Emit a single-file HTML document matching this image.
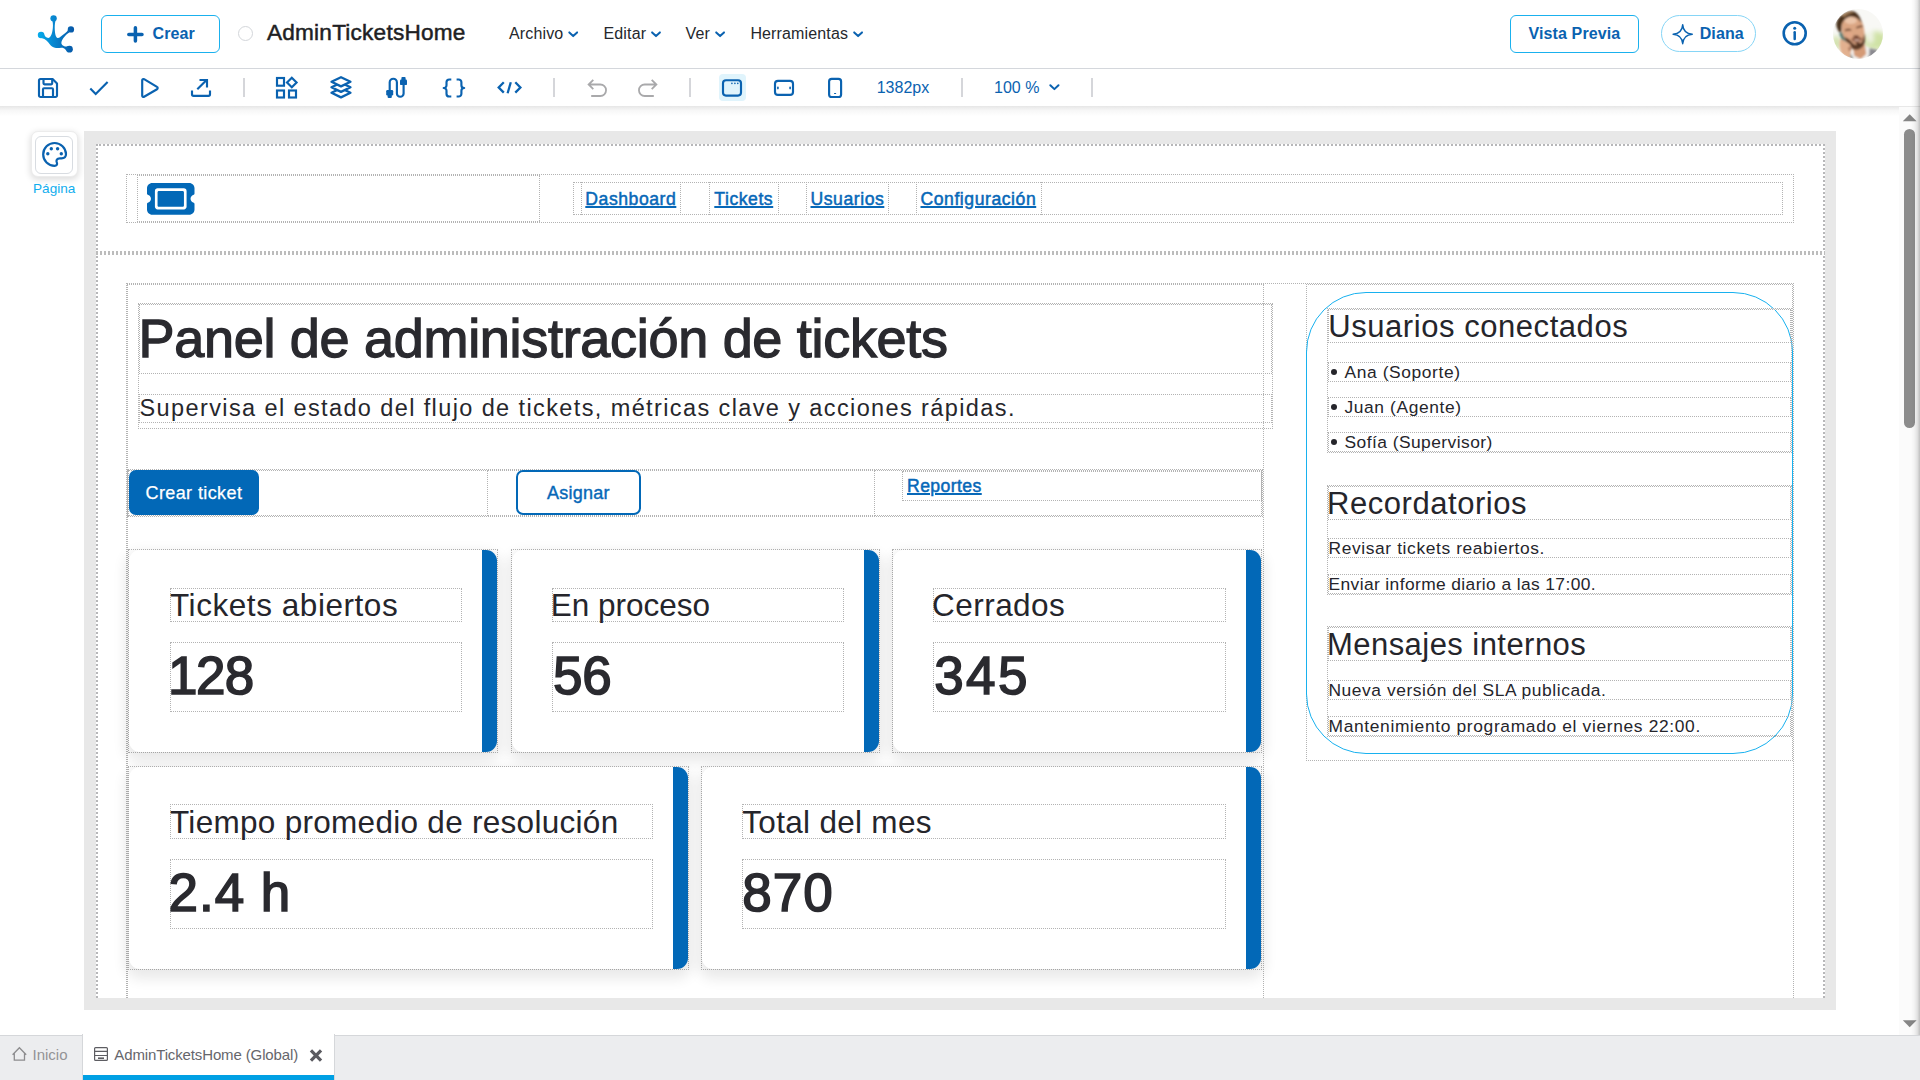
<!DOCTYPE html>
<html lang="es">
<head>
<meta charset="utf-8">
<title>AdminTicketsHome</title>
<style>
*{box-sizing:border-box;margin:0;padding:0}
html,body{width:1920px;height:1080px;overflow:hidden;background:#fff}
body{position:relative;font-family:"Liberation Sans",sans-serif;color:#25282d;-webkit-font-smoothing:antialiased}
.a{position:absolute}
.t{position:absolute;white-space:nowrap;line-height:1}
svg{position:absolute;overflow:visible}
.ic{fill:none;stroke:#0a62b0;stroke-width:2.150;stroke-linecap:round;stroke-linejoin:round}
.gr{fill:none;stroke:#a9a9ab;stroke-width:1.8;stroke-linecap:butt;stroke-linejoin:miter}
.sep{position:absolute;top:78px;width:2px;height:19px;background:#d5d6da}
.d{position:absolute;border:1px dotted #b3b3b3}
.menu{position:absolute;top:25px;font-size:16px;letter-spacing:.14px;line-height:18px;white-space:nowrap;color:#25282d}
.btnh{position:absolute;top:15px;height:38px;border:1px solid #1ab1ee;border-radius:6px;background:#fff}
.bh{position:absolute;font-weight:bold;font-size:16px;letter-spacing:.12px;line-height:18px;color:#0a62b0;white-space:nowrap}
.cv{font-family:"Liberation Sans",sans-serif;color:#25252b}
.card{position:absolute;background:#fff;border-right:15px solid #0268b7;border-radius:11px;box-shadow:0 6px 13px 4px rgba(0,0,0,.088)}
.lab{font-size:31.500px}
.num{font-size:53px;color:#2a2a2f;-webkit-text-stroke:1.600px #2a2a2f}
.sh{font-size:31px;letter-spacing:.55px}
.si{font-size:17.4px;letter-spacing:.6px}
.lnk{font-size:17.600px;letter-spacing:.55px;color:#0768b8;text-decoration:underline;text-decoration-thickness:1.500px;text-underline-offset:1.100px;-webkit-text-stroke:.5px #0768b8}
</style>
</head>
<body>
<!-- ============ HEADER ============ -->
<div class="a" id="hdr" style="left:0;top:0;width:1920px;height:69px;background:#fff;border-bottom:1px solid #d4d7dc"></div>

<!-- logo -->
<svg style="left:30px;top:8px" width="54" height="52" viewBox="0 0 1122 1080">
<defs><linearGradient id="lg" x1="160" y1="0" x2="920" y2="0" gradientUnits="userSpaceOnUse"><stop offset="0" stop-color="#05acec"/><stop offset=".45" stop-color="#0785cf"/><stop offset="1" stop-color="#0656a6"/></linearGradient></defs>
<g fill="url(#lg)">
<circle cx="490" cy="215" r="66"/><circle cx="850" cy="445" r="66"/><circle cx="230" cy="560" r="68"/><circle cx="820" cy="855" r="70"/>
<path d="M466 270 C482 330 478 400 468 460 C455 545 425 615 380 622 C335 622 305 580 290 540 L250 628 C320 640 370 700 410 755 C445 800 480 828 540 832 C600 836 660 815 700 835 C730 850 745 870 760 895 L800 790 C760 810 700 805 665 765 C640 735 650 690 690 630 C730 575 775 530 815 510 L790 455 C770 490 740 515 700 545 C650 585 610 625 575 622 C535 610 520 540 515 450 C512 390 515 320 528 270 Z"/>
</g></svg>
<!-- Crear -->
<div class="btnh" style="left:101px;width:119px"></div>
<svg style="left:0;top:0" width="300" height="69"><path d="M128.800 34.400H142M135.400 27.800V41" fill="none" stroke="#0a62b0" stroke-width="3.500" stroke-linecap="round"/></svg>
<div class="bh" style="left:152.500px;top:25px">Crear</div>
<!-- radio + title -->
<div class="a" style="left:238px;top:26px;width:15px;height:15px;border:1px solid #d3d6da;border-radius:50%"></div>
<div class="t" style="left:267px;top:20px;font-size:22.600px;line-height:26px;letter-spacing:.22px;color:#1f1f24;-webkit-text-stroke:.5px #1f1f24">AdminTicketsHome</div>
<!-- menus -->
<div class="menu" style="left:509px">Archivo</div>
<div class="menu" style="left:603.500px">Editar</div>
<div class="menu" style="left:685.500px">Ver</div>
<div class="menu" style="left:750.400px">Herramientas</div>
<svg style="left:0;top:0" width="1920" height="69"><g fill="none" stroke="#0a62b0" stroke-width="2" stroke-linecap="round" stroke-linejoin="round">
<path d="M569.300 32.400l3.900 3.700 3.900-3.700"/><path d="M652.100 32.400l3.900 3.700 3.900-3.700"/><path d="M716.200 32.400l3.900 3.700 3.900-3.700"/><path d="M854.200 32.400l3.900 3.700 3.900-3.700"/>
</g></svg>
<!-- Vista previa -->
<div class="btnh" style="left:1510px;width:129px"></div>
<div class="bh" style="left:1528.500px;top:25px">Vista Previa</div>
<!-- Diana -->
<div class="a" style="left:1661px;top:15px;width:95px;height:37px;border:1px solid #86d5f6;border-radius:19px;background:#fff"></div>
<svg style="left:0;top:0" width="1920" height="69"><path d="M1682.700 24.600C1683.100 30.400 1686.500 33.800 1692.300 34.200C1686.500 34.600 1683.100 38 1682.700 43.800C1682.300 38 1678.900 34.600 1673.100 34.200C1678.900 33.800 1682.300 30.400 1682.700 24.600Z" fill="none" stroke="#0a62b0" stroke-width="1.400" stroke-linejoin="round"/>
<circle cx="1794.700" cy="33.300" r="11" fill="none" stroke="#0a62b0" stroke-width="2.600"/><circle cx="1794.700" cy="28.200" r="1.500" fill="#0a62b0"/><path d="M1794.700 32.300V39" stroke="#0a62b0" stroke-width="2.500" stroke-linecap="round"/></svg>
<div class="bh" style="left:1699.700px;top:25px">Diana</div>

<!-- avatar -->
<svg style="left:1828px;top:4px" width="60" height="60" viewBox="0 0 1080 1080">
<defs><clipPath id="avc"><circle cx="540" cy="538" r="450"/></clipPath><filter id="avb" x="-10%" y="-10%" width="120%" height="120%"><feGaussianBlur stdDeviation="16"/></filter><filter id="avb2" x="-30%" y="-30%" width="160%" height="160%"><feGaussianBlur stdDeviation="45"/></filter></defs>
<g clip-path="url(#avc)"><rect width="1080" height="1080" fill="#f8f8f5"/>
<g filter="url(#avb2)"><ellipse cx="850" cy="660" rx="230" ry="170" fill="#cfe2a4"/><ellipse cx="150" cy="700" rx="90" ry="130" fill="#d3e2ae"/><ellipse cx="760" cy="600" rx="60" ry="110" fill="#f4f6ec"/></g>
<g filter="url(#avb)">
<path d="M730 790L900 830L800 1000L720 960Z" fill="#8a8990"/>
<path d="M660 760L745 790L740 930L600 1000L420 990L400 880L470 860Z" fill="#f1f0ee"/>
<path d="M400 880L450 980L410 985Z" fill="#3a4a48"/>
<path d="M450 780L660 720L690 900L590 990L470 930Z" fill="#d49a76"/>
<path d="M245 360C290 245 420 205 520 228C605 260 645 380 655 500C668 640 645 765 560 815C470 835 375 765 315 665C265 580 235 470 245 360Z" fill="#dba683"/>
<ellipse cx="410" cy="300" rx="110" ry="60" fill="#ecc6aa"/>
<ellipse cx="380" cy="560" rx="60" ry="50" fill="#e2a888"/>
<path d="M290 600C330 700 400 800 480 822C560 838 645 782 662 680C670 620 664 560 652 530C640 640 600 720 540 742C480 747 440 702 400 652C360 622 320 602 290 600Z" fill="#5b3b28"/>
<path d="M420 620C470 600 560 590 620 610C610 640 560 700 520 700C470 700 430 660 420 620Z" fill="#8a5540"/>
<ellipse cx="520" cy="650" rx="62" ry="13" fill="#e9d2c4"/>
<ellipse cx="548" cy="722" rx="45" ry="28" fill="#4e3222"/>
<ellipse cx="505" cy="585" rx="55" ry="20" fill="#5e3626"/>
<path d="M300 470C340 440 390 440 420 455L415 480C380 470 340 475 310 490Z" fill="#6a412c"/>
<path d="M505 420C540 395 590 385 625 390L620 420C585 418 545 430 515 445Z" fill="#6a412c"/>
<path d="M150 350C160 250 280 140 420 125C520 130 580 220 610 350C560 280 500 225 420 225C330 235 260 300 245 390C240 440 245 480 240 520L195 500C170 450 145 400 150 350Z" fill="#4a301f"/>
<path d="M250 210C310 150 400 130 470 150C420 170 340 190 290 240Z" fill="#a27c55"/>
<path d="M200 530L250 510L320 680L270 700Z" fill="#52796f"/>
<path d="M215 640C260 620 300 680 330 690C390 700 430 760 420 830C410 900 400 960 380 990L250 900C210 840 200 740 215 640Z" fill="#e2b08f"/>
<ellipse cx="390" cy="805" rx="25" ry="40" fill="#a8745a"/>
</g></g></svg>
<!-- ============ TOOLBAR ============ -->
<div class="a" id="tb" style="left:0;top:69px;width:1920px;height:37px;background:#fff"></div>
<div class="a" style="left:0;top:106px;width:1920px;height:10px;background:linear-gradient(#e6e6e6,#f7f7f7 45%,#fff)"></div>

<div class="a" style="left:719px;top:74px;width:27px;height:27px;background:#e0f4fc;border-radius:4px"></div>
<div class="sep" style="left:243px"></div><div class="sep" style="left:553px"></div><div class="sep" style="left:689px"></div><div class="sep" style="left:961px"></div><div class="sep" style="left:1091px"></div>
<svg style="left:0;top:69px" width="1920" height="37" viewBox="0 69 1920 37">
<g class="ic">
<!-- save -->
<path d="M40.500 79H52.600L57 83.400V95.500A1.500 1.500 0 0 1 55.500 97H40.500A1.500 1.500 0 0 1 39 95.500V80.500A1.500 1.500 0 0 1 40.500 79Z"/>
<path d="M43.500 79.500V83.300A1 1 0 0 0 44.500 84.300H51.200A1 1 0 0 0 52.200 83.300V79.500"/>
<path d="M43 97V89.200A1 1 0 0 1 44 88.200H52A1 1 0 0 1 53 89.200V97"/>
<!-- check -->
<path d="M90.300 88.500L95.700 93.900L107.600 82" stroke-linecap="butt" stroke-linejoin="miter"/>
<!-- play -->
<path d="M142.200 80.300V95.700A1.300 1.300 0 0 0 144.100 96.800L157 89.200A1.300 1.300 0 0 0 157 86.900L144.100 79.200A1.300 1.300 0 0 0 142.200 80.300Z"/>
<!-- export -->
<path d="M192 90.500V94.300A1.500 1.500 0 0 0 193.500 95.800H208.500A1.500 1.500 0 0 0 210 94.300V90.500" stroke-linecap="butt"/>
<path d="M197.300 89.300L206.600 80M199.500 80H207V87.500" stroke-linecap="butt" stroke-linejoin="miter"/>
<!-- widgets -->
<g stroke-linejoin="miter"><rect x="277" y="78" width="7" height="7.700"/><rect x="277" y="90.500" width="7" height="7"/><rect x="289" y="90.500" width="7" height="7"/><path d="M291.800 77.700L296.600 82.500L291.800 87.300L287 82.500Z"/></g>
<!-- layers -->
<g fill="#fff" stroke-width="2.300"><path d="M341 88.250L350.500 92.800L341 97.350L331.500 92.800Z"/><path d="M341 82.750L350.500 87.300L341 91.850L331.500 87.300Z"/><path d="M341 77.250L350.500 81.800L341 86.350L331.500 81.800Z"/></g>
<!-- cable -->
<path d="M389.700 90.500V82.300A3.600 3.600 0 0 1 396.900 82.300V93.400A3.350 3.350 0 0 0 403.600 93.400V85"/>
<!-- braces -->
<path d="M451.300 79.500H449.300A2.800 2.800 0 0 0 446.500 82.300V85.200A2.800 2.800 0 0 1 443.700 88A2.800 2.800 0 0 1 446.500 90.800V93.700A2.800 2.800 0 0 0 449.300 96.500H451.300" stroke-linecap="butt"/>
<path d="M456.600 79.500H458.600A2.800 2.800 0 0 1 461.400 82.300V85.200A2.800 2.800 0 0 0 464.200 88A2.800 2.800 0 0 0 461.400 90.800V93.700A2.800 2.800 0 0 1 458.600 96.500H456.600" stroke-linecap="butt"/>
<!-- code -->
<g stroke-width="2.300" stroke-linecap="butt" stroke-linejoin="miter"><path d="M503.800 82.300L498.700 87.450L503.800 92.600"/><path d="M510.800 82.300L507.600 93.300"/><path d="M515.300 82.300L520.400 87.450L515.300 92.600"/></g>
<!-- devices -->
<rect x="723" y="80.200" width="18" height="15.400" rx="3"/>
<rect x="775" y="80.800" width="18" height="14.100" rx="3"/>
<rect x="829.100" y="78.800" width="12" height="18.200" rx="2.600"/>
</g>
<g fill="#0a62b0">
<rect x="386.200" y="90" width="7" height="5.500" rx="1.200"/><rect x="387.600" y="94" width="4.200" height="3.900" rx="1"/>
<rect x="400" y="79.500" width="7" height="5.600" rx="1.200"/><rect x="401.400" y="77" width="4.200" height="4" rx="1"/>
<circle cx="731.900" cy="83.400" r=".8"/><circle cx="734.900" cy="83.400" r=".8"/><circle cx="737.800" cy="83.400" r=".8"/>
<ellipse cx="777.900" cy="88" rx=".9" ry="1.400"/><ellipse cx="790.100" cy="88" rx=".9" ry="1.400"/>
<rect x="834" y="92.900" width="2.200" height="1.100" rx=".5"/>
</g>
<g class="gr">
<path d="M593.300 79.800L588.600 84.500L593.300 89.200M588.600 84.500H600.300A5.750 5.750 0 0 1 600.300 96H591.200"/>
<path d="M651.700 79.800L656.400 84.500L651.700 89.200M656.400 84.500H644.700A5.750 5.750 0 0 0 644.700 96H653.800"/>
</g>
</svg>
<div class="t" style="left:876.700px;top:79px;font-size:16px;line-height:18px;color:#0a62b0">1382px</div>
<div class="t" style="left:994px;top:79px;font-size:16px;line-height:18px;color:#0a62b0">100 %</div>
<svg style="left:0;top:69px" width="1920" height="37" viewBox="0 69 1920 37"><path d="M1050.300 85.200l4.100 3.900 4.100-3.900" fill="none" stroke="#0a62b0" stroke-width="2" stroke-linecap="round" stroke-linejoin="round"/></svg>
<!-- ============ CANVAS ============ -->
<div class="a" id="grey" style="left:84px;top:131px;width:1752px;height:879px;background:#e8e8e8"></div>
<div class="a" id="page" style="left:96px;top:144px;width:1729px;height:854px;background:#fff;border:2px dotted #b7b7b9;border-bottom:none"></div>

<!-- pagina widget -->
<div class="a" style="left:31px;top:131px;width:47px;height:46px;background:#fff;border:1px solid #ececec;border-radius:7px;box-shadow:0 2px 6px 1px rgba(0,0,0,.13)"></div>
<div class="a" style="left:35px;top:136px;width:38px;height:38px;background:#fff;border:1px solid #d8dce1;border-radius:6px"></div>
<svg style="left:0;top:126px" width="90" height="60" viewBox="0 126 90 60"><path d="M54.600 143A11.400 11.400 0 1 0 54.600 165.800C56.700 165.800 57.500 164.300 56.900 162.900C55.700 160.200 57 158.300 59.800 158.300H61.500C64.300 158.300 66 156.500 66 154A11.400 11.400 0 0 0 54.600 143Z" fill="none" stroke="#0a62b0" stroke-width="2.200" stroke-linejoin="round"/><g fill="#0a62b0"><circle cx="51.300" cy="148.700" r="1.700"/><circle cx="57.600" cy="148.700" r="1.700"/><circle cx="47.800" cy="153.700" r="1.700"/><circle cx="61.300" cy="153.700" r="1.700"/></g></svg>
<div class="t" style="left:33px;top:181px;font-size:13.600px;line-height:16px;color:#10adee">Página</div>
<!-- divider -->
<div class="a" style="left:96px;top:251px;width:1729px;height:4px;background:repeating-linear-gradient(90deg,#bcbcbc 0 2px,#fff 2px 4px)"></div>
<!-- header section -->
<div class="d" style="left:126px;top:174px;width:1668px;height:49px"></div>
<div class="d" style="left:137px;top:175px;width:403px;height:47px;border-right:none"></div>
<div class="d" style="left:539px;top:174px;width:1255px;height:49px"></div>
<div class="d" style="left:573px;top:182px;width:1210px;height:33px"></div>
<div class="d" style="left:581px;top:182px;width:100px;height:33px;border-top:none;border-bottom:none"></div>
<div class="d" style="left:709px;top:182px;width:70px;height:33px;border-top:none;border-bottom:none"></div>
<div class="d" style="left:806px;top:182px;width:83px;height:33px;border-top:none;border-bottom:none"></div>
<div class="d" style="left:916px;top:182px;width:126px;height:33px;border-top:none;border-bottom:none"></div>
<svg style="left:147px;top:183px" width="47.500" height="31.700" viewBox="0 64 576 384"><path fill="#0268b7" d="M64 64C28.700 64 0 92.700 0 128v64c0 8.800 7.400 15.700 15.700 18.600C34.500 217.100 48 235 48 256s-13.500 38.900-32.300 45.400C7.400 304.300 0 311.200 0 320v64c0 35.300 28.700 64 64 64H512c35.300 0 64-28.700 64-64V320c0-8.800-7.400-15.700-15.700-18.600C541.500 294.900 528 277 528 256s13.500-38.900 32.300-45.400c8.300-2.900 15.700-9.800 15.700-18.600V128c0-35.300-28.700-64-64-64H64zm64 112l0 160c0 8.800 7.200 16 16 16H432c8.800 0 16-7.200 16-16V176c0-8.800-7.200-16-16-16H144c-8.800 0-16 7.200-16 16zM96 160c0-17.700 14.300-32 32-32H448c17.700 0 32 14.300 32 32V352c0 17.700-14.300 32-32 32H128c-17.700 0-32-14.300-32-32V160z"/></svg>
<div class="t lnk" style="left:585.300px;top:188.700px;line-height:20px">Dashboard</div>
<div class="t lnk" style="left:714.300px;top:188.700px;line-height:20px">Tickets</div>
<div class="t lnk" style="left:810.500px;top:188.700px;line-height:20px">Usuarios</div>
<div class="t lnk" style="left:920.500px;top:188.700px;line-height:20px">Configuración</div>

<!-- main container -->
<div class="d" style="left:126px;top:283px;width:1668px;height:715px;border-bottom:none"></div>
<div class="d" style="left:127px;top:284px;width:1137px;height:714px;border-bottom:none"></div>
<div class="d" style="left:1306px;top:284px;width:487px;height:477px"></div>
<div class="d" style="left:138px;top:303px;width:1135px;height:126px"></div>
<div class="d" style="left:139px;top:304px;width:1133px;height:70px"></div>
<div class="d" style="left:139px;top:394px;width:1133px;height:29px"></div>
<div class="t cv" id="h1" style="left:138.500px;top:307.900px;font-size:54px;line-height:60px;letter-spacing:-.3px;color:#2a2a2f;-webkit-text-stroke:1.300px #2a2a2f">Panel de administración de tickets</div>
<div class="t cv" id="sub" style="left:139.500px;top:394.300px;font-size:23.500px;line-height:28px;letter-spacing:1.390px;color:#27272c">Supervisa el estado del flujo de tickets, métricas clave y acciones rápidas.</div>
<div class="d" style="left:127px;top:469px;width:1136px;height:48px"></div>
<div class="d" style="left:128px;top:470px;width:360px;height:46px"></div>
<div class="d" style="left:487px;top:470px;width:388px;height:46px;border-left:none"></div>
<div class="d" style="left:874px;top:470px;width:388px;height:46px"></div>
<div class="d" style="left:902px;top:471px;width:360px;height:30px"></div>
<div class="a" style="left:129px;top:470px;width:130px;height:45px;background:#0268b7;border-radius:7px"></div>
<div class="t cv" style="left:145.500px;top:482.700px;font-size:18px;line-height:20px;letter-spacing:.4px;color:#fff;-webkit-text-stroke:.25px #fff">Crear ticket</div>
<div class="a" style="left:516px;top:470px;width:125px;height:45px;border:2px solid #0268b7;border-radius:7px;background:#fff"></div>
<div class="t cv" style="left:547px;top:482.700px;font-size:18px;line-height:20px;letter-spacing:.25px;color:#0768b8;-webkit-text-stroke:.4px #0768b8">Asignar</div>
<div class="t lnk" style="left:907px;top:475.650px;line-height:20px;letter-spacing:.42px">Reportes</div>
<!-- cards -->
<div class="d" style="left:128px;top:549px;width:370px;height:204px"></div>
<div class="card" style="left:129px;top:550px;width:368px;height:202px"></div>
<div class="d" style="left:170px;top:588px;width:292px;height:34px"></div>
<div class="d" style="left:170px;top:642px;width:292px;height:70px"></div>
<div class="t cv lab" style="left:170px;top:587.85px;line-height:34px;letter-spacing:0.55px">Tickets abiertos</div>
<div class="t cv num" style="left:168.1px;top:646.2px;line-height:60px;letter-spacing:-0.6px"><span style="letter-spacing:-1.600px">1</span>28</div>
<div class="d" style="left:511px;top:549px;width:369px;height:204px"></div>
<div class="card" style="left:512px;top:550px;width:367px;height:202px"></div>
<div class="d" style="left:552px;top:588px;width:292px;height:34px"></div>
<div class="d" style="left:552px;top:642px;width:292px;height:70px"></div>
<div class="t cv lab" style="left:550.75px;top:587.85px;line-height:34px;letter-spacing:0px">En proceso</div>
<div class="t cv num" style="left:552.9px;top:646.2px;line-height:60px;letter-spacing:0px">56</div>
<div class="d" style="left:892px;top:549px;width:370px;height:204px"></div>
<div class="card" style="left:893px;top:550px;width:368px;height:202px"></div>
<div class="d" style="left:933px;top:588px;width:293px;height:34px"></div>
<div class="d" style="left:933px;top:642px;width:293px;height:70px"></div>
<div class="t cv lab" style="left:932px;top:587.85px;line-height:34px;letter-spacing:0.47px">Cerrados</div>
<div class="t cv num" style="left:934.2px;top:646.2px;line-height:60px;letter-spacing:2.45px">345</div>
<div class="d" style="left:128px;top:766px;width:561px;height:204px"></div>
<div class="card" style="left:129px;top:767px;width:559px;height:202px"></div>
<div class="d" style="left:170px;top:804px;width:483px;height:35px"></div>
<div class="d" style="left:170px;top:859px;width:483px;height:70px"></div>
<div class="t cv lab" style="left:170px;top:804.85px;line-height:34px;letter-spacing:0.29px">Tiempo promedio de resolución</div>
<div class="t cv num" style="left:168.6px;top:863.2px;line-height:60px;letter-spacing:0.95px">2.4 h</div>
<div class="d" style="left:701px;top:766px;width:561px;height:204px"></div>
<div class="card" style="left:702px;top:767px;width:559px;height:202px"></div>
<div class="d" style="left:742px;top:804px;width:484px;height:35px"></div>
<div class="d" style="left:742px;top:859px;width:484px;height:70px"></div>
<div class="t cv lab" style="left:742.3px;top:804.85px;line-height:34px;letter-spacing:0.3px">Total del mes</div>
<div class="t cv num" style="left:742.2px;top:863.2px;line-height:60px;letter-spacing:1.1px">870</div>
<!-- sidebar -->
<div class="a" style="left:1306px;top:292px;width:487px;height:462px;border:1px solid #18b1ef;border-radius:60px"></div>
<div class="d" style="left:1327px;top:308px;width:465px;height:145px"></div>
<div class="d" style="left:1327px;top:485px;width:465px;height:110px"></div>
<div class="d" style="left:1327px;top:626px;width:465px;height:111px"></div>
<div class="d" style="left:1328px;top:309px;width:463px;height:34px"></div>
<div class="t cv sh" style="left:1328.3px;top:310px;line-height:34px;letter-spacing:0.55px">Usuarios conectados</div>
<div class="d" style="left:1328px;top:362px;width:463px;height:20px"></div>
<div class="a" style="left:1331px;top:369px;width:6px;height:6px;border-radius:50%;background:#25252b"></div><div class="t cv si" style="left:1344.500px;top:362.2px;line-height:20px;letter-spacing:0.6px">Ana (Soporte)</div>
<div class="d" style="left:1328px;top:397px;width:463px;height:20px"></div>
<div class="a" style="left:1331px;top:404px;width:6px;height:6px;border-radius:50%;background:#25252b"></div><div class="t cv si" style="left:1344.500px;top:397.2px;line-height:20px;letter-spacing:0.6px">Juan (Agente)</div>
<div class="d" style="left:1328px;top:432px;width:463px;height:20px"></div>
<div class="a" style="left:1331px;top:439px;width:6px;height:6px;border-radius:50%;background:#25252b"></div><div class="t cv si" style="left:1344.500px;top:432.2px;line-height:20px;letter-spacing:0.45px">Sofía (Supervisor)</div>
<div class="d" style="left:1328px;top:486px;width:463px;height:34px"></div>
<div class="t cv sh" style="left:1327px;top:487px;line-height:34px;letter-spacing:0.55px">Recordatorios</div>
<div class="d" style="left:1328px;top:538px;width:463px;height:20px"></div>
<div class="t cv si" style="left:1328.500px;top:538.2px;line-height:20px;letter-spacing:0.61px">Revisar tickets reabiertos.</div>
<div class="d" style="left:1328px;top:574px;width:463px;height:20px"></div>
<div class="t cv si" style="left:1328.500px;top:574.2px;line-height:20px;letter-spacing:0.39px">Enviar informe diario a las 17:00.</div>
<div class="d" style="left:1328px;top:627px;width:463px;height:34px"></div>
<div class="t cv sh" style="left:1327px;top:628px;line-height:34px;letter-spacing:0.45px">Mensajes internos</div>
<div class="d" style="left:1328px;top:680px;width:463px;height:20px"></div>
<div class="t cv si" style="left:1328.500px;top:680.2px;line-height:20px;letter-spacing:0.56px">Nueva versión del SLA publicada.</div>
<div class="d" style="left:1328px;top:716px;width:463px;height:20px"></div>
<div class="t cv si" style="left:1328.500px;top:716.2px;line-height:20px;letter-spacing:0.65px">Mantenimiento programado el viernes 22:00.</div>
<!-- ============ TABS ============ -->
<div class="a" id="tabs" style="left:0;top:1035px;width:1920px;height:45px;background:#ecedef;border-top:1px solid #d5d7da"></div>

<div class="a" style="left:82px;top:1034px;width:253px;height:46px;background:#fff;border-left:1px solid #d5d7da;border-right:1px solid #d5d7da"></div>
<div class="a" style="left:83px;top:1075px;width:251px;height:5px;background:#00a0e4"></div>
<svg style="left:0;top:1036px" width="340" height="44" viewBox="0 1036 340 44">
<path d="M12.600 1054.800L19.400 1047.800L26.200 1054.800M14.300 1053.300V1060.100H24.500V1053.300" fill="none" stroke="#8c8c8e" stroke-width="1.300" stroke-linejoin="miter"/>
<g fill="none" stroke="#5d5d62" stroke-width="1.200"><rect x="94.600" y="1047.600" width="12.800" height="12.800" rx="1"/><path d="M94.600 1051.300H107.400M94.600 1055.500H107.400"/><path d="M98 1058.200H104" stroke-width="1.600"/></g>
<path d="M312.100 1049.300L316 1053.200L319.900 1049.300L322.200 1051.600L318.300 1055.500L322.200 1059.400L319.900 1061.700L316 1057.800L312.100 1061.700L309.800 1059.400L313.700 1055.500L309.800 1051.600Z" fill="#5a5a60"/>
</svg>
<div class="t" style="left:32.500px;top:1046px;font-size:15px;line-height:18px;color:#939396">Inicio</div>
<div class="t" id="tabt" style="left:114.300px;top:1046px;font-size:15px;line-height:18px;letter-spacing:-.13px;color:#66666c">AdminTicketsHome (Global)</div>
<!-- scrollbar -->
<div class="a" style="left:1899px;top:107px;width:21px;height:928px;background:#fbfbfb"></div>
<div class="a" style="left:1904px;top:129px;width:11px;height:299px;background:#8c8c8c;border-radius:6px"></div>
<svg style="left:1900px;top:110px" width="20" height="925" viewBox="1900 110 20 925"><path d="M1902.800 121.200L1909.700 114.200L1916.600 121.200Z" fill="#858585"/><path d="M1902.800 1020.200L1909.700 1027.200L1916.600 1020.200Z" fill="#858585"/></svg>
<div class="a" style="left:1911px;top:0;width:9px;height:1035px;background:linear-gradient(90deg,rgba(0,0,0,0),rgba(0,0,0,.03) 35%,rgba(0,0,0,.1) 70%,rgba(0,0,0,.24))"></div>
</body>
</html>
